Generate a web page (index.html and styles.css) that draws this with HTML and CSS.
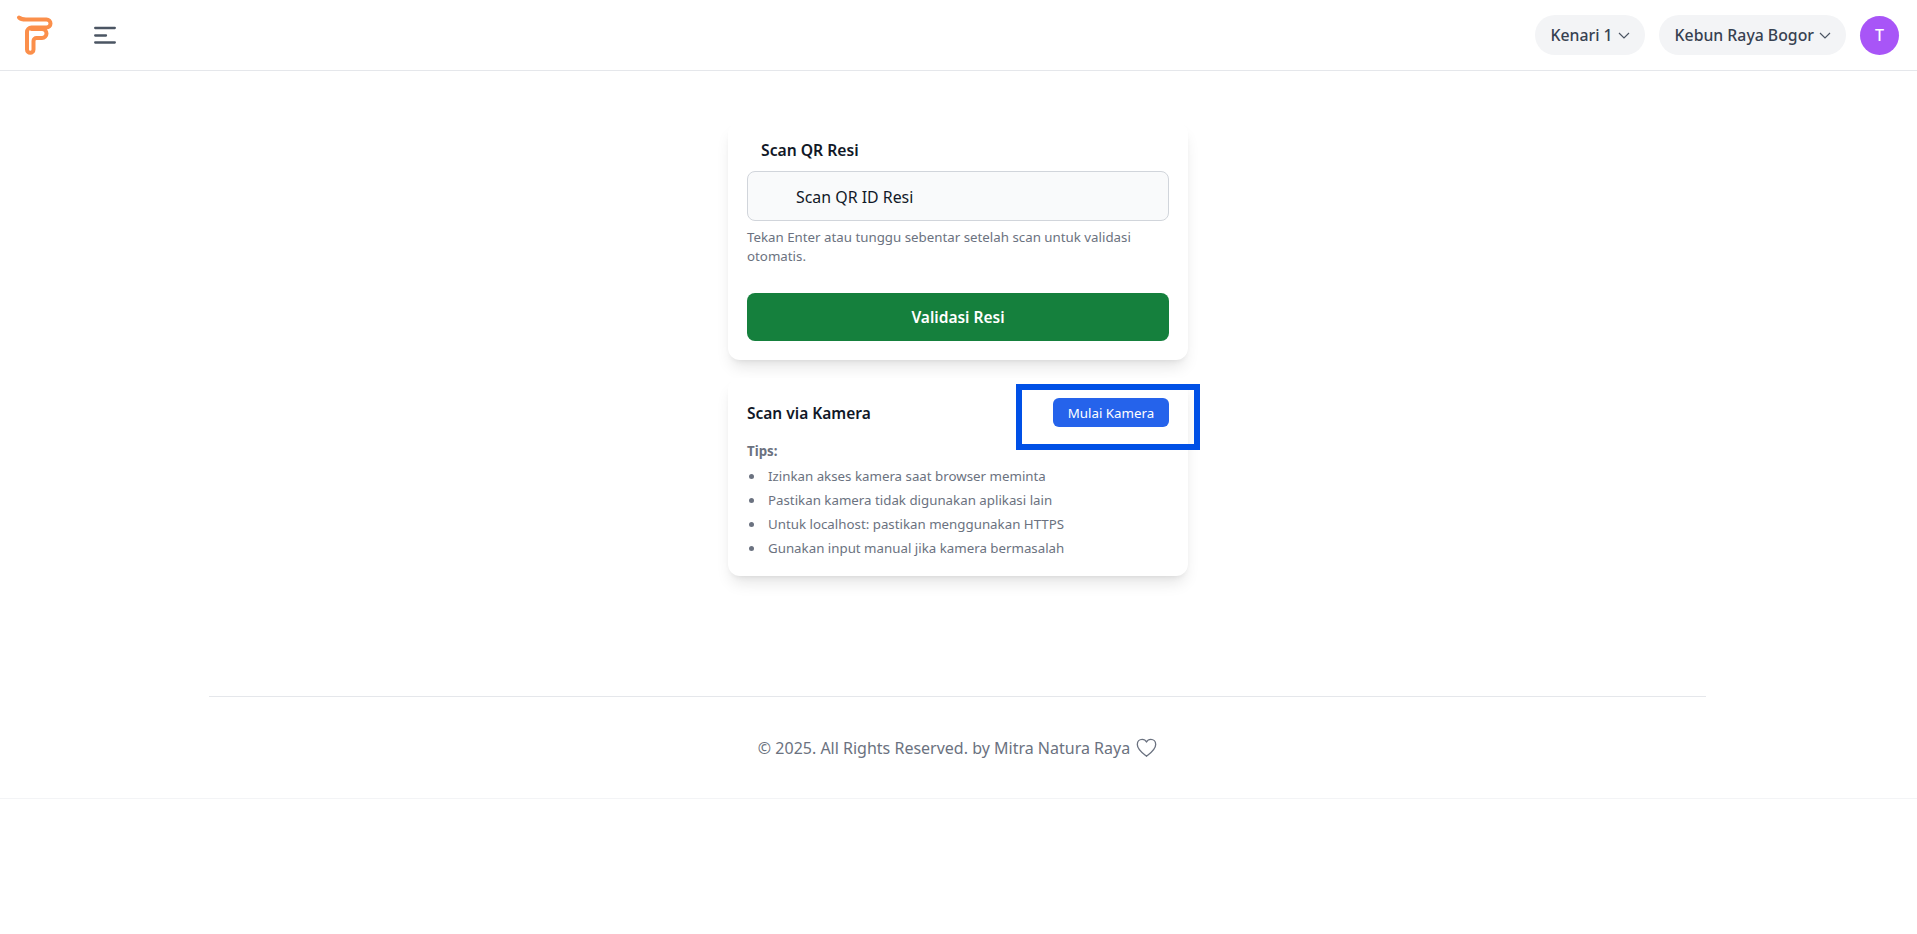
FILE: index.html
```html
<!DOCTYPE html>
<html lang="en">
<head>
  <meta charset="UTF-8">
  <title>Scan QR Resi</title>
  <link rel="stylesheet" href="styles.css">
</head>

<body>
  <header class="topbar">
    <div class="topbar-left">
      <svg class="logo" width="40" height="44" viewBox="0 0 40 44" fill="none" stroke="#fb8f4b" stroke-width="4" stroke-linecap="round" stroke-linejoin="round">
        <path d="M3 4.500 Q5 6.500 10 6.500 H30.500 A4 4 0 0 1 30.500 14.500 H15.500 A4.500 4.500 0 0 0 11 19 V36.500 A3.200 3.200 0 0 0 17.500 36.500 V28 A3 3 0 0 1 20.500 25 H26 A4.500 4.500 0 0 0 26 16 H15.500"/>
      </svg>
      <svg class="menu-icon" width="22" height="18" viewBox="0 0 22 18" fill="none" stroke="#4b5563" stroke-width="2.300" stroke-linecap="round">
        <path d="M1.200 2H20.800"/>
        <path d="M1.200 9.500H12"/>
        <path d="M1.200 16.500H20.800"/>
      </svg>
    </div>
    <div class="topbar-right">
      <button class="pill">Kenari 1
        <svg class="chevron" width="12" height="12" viewBox="0 0 12 12" fill="none" stroke="#4b5563" stroke-width="1.200"><path d="M1 4l5 5 5-5"/></svg>
      </button>
      <button class="pill">Kebun Raya Bogor
        <svg class="chevron" width="12" height="12" viewBox="0 0 12 12" fill="none" stroke="#4b5563" stroke-width="1.200"><path d="M1 4l5 5 5-5"/></svg>
      </button>
      <div class="avatar">T</div>
    </div>
  </header>

  <main class="content">
    <section class="card card-resi">
      <h2 class="resi-title">Scan QR Resi</h2>
      <div class="resi-input">Scan QR ID Resi</div>
      <p class="hint">Tekan Enter atau tunggu sebentar setelah scan untuk validasi otomatis.</p>
      <button class="btn-validate">Validasi Resi</button>
    </section>

    <section class="card card-camera">
      <div class="camera-head">
        <h2>Scan via Kamera</h2>
        <button class="btn-camera">Mulai Kamera</button>
        <div class="highlight"></div>
      </div>
      <p class="tips-title">Tips:</p>
      <ul class="tips">
        <li>Izinkan akses kamera saat browser meminta</li>
        <li>Pastikan kamera tidak digunakan aplikasi lain</li>
        <li>Untuk localhost: pastikan menggunakan HTTPS</li>
        <li>Gunakan input manual jika kamera bermasalah</li>
      </ul>
    </section>
  </main>

  <footer class="footer">
    <div class="footer-inner">
      © 2025. All Rights Reserved. by Mitra Natura Raya
      <svg class="heart" width="21" height="20" viewBox="0 0 24 22" fill="none" stroke="#6b7280" stroke-width="1.500" stroke-linejoin="round">
        <path d="M12 20.500 C9 18 1.500 13 1.500 7 C1.500 3.500 4 1.200 7 1.200 C9 1.200 11 2.200 12 4.200 C13 2.200 15 1.200 17 1.200 C20 1.200 22.500 3.500 22.500 7 C22.500 13 15 18 12 20.500 Z"/>
      </svg>
    </div>
  </footer>
</body>
</html>
```

FILE: styles.css
```css
* {
  box-sizing: border-box;
}

body {
  margin: 0;
  background: #fff;
  font-family: "Noto Sans", Arial, sans-serif;
  color: #111827;
}

h2, p, ul {
  margin: 0;
  padding: 0;
}

button {
  font-family: inherit;
  border: none;
  cursor: pointer;
}

.topbar {
  height: 71px;
  display: flex;
  align-items: center;
  justify-content: space-between;
  padding: 0 18px 0 16px;
  border-bottom: 1px solid #e5e7eb;
}

.topbar-left {
  display: flex;
  align-items: center;
  gap: 38px;
}

.topbar-right {
  display: flex;
  align-items: center;
  gap: 14px;
}

.pill {
  height: 40px;
  display: flex;
  align-items: center;
  gap: 5px;
  padding: 0 15px 0 16px;
  background: #f3f4f6;
  border-radius: 20px;
  font-size: 15.8px;
  font-weight: 500;
  color: #374151;
}

.avatar {
  width: 39px;
  height: 39px;
  border-radius: 50%;
  background: #a855f7;
  color: #fff;
  font-size: 16px;
  font-weight: 500;
  display: flex;
  align-items: center;
  justify-content: center;
}

.content {
  width: 460px;
  margin: 51px 0 0 728px;
  display: flex;
  flex-direction: column;
  gap: 18px;
}

.card {
  background: #fff;
  border-radius: 12px;
  box-shadow: 0 10px 15px -3px rgba(0, 0, 0, 0.1), 0 4px 6px -4px rgba(0, 0, 0, 0.1);
  padding: 0 19px;
}

.card-resi {
  height: 238px;
  padding-top: 16px;
}

.card-camera {
  height: 198px;
  padding-top: 20px;
}

.resi-title {
  font-size: 15.7px;
  font-weight: 600;
  line-height: 24px;
  padding-left: 14px;
}

.resi-input {
  height: 50px;
  margin-top: 9px;
  padding: 2px 0 0 48px;
  display: flex;
  align-items: center;
  background: #f9fafb;
  border: 1px solid #d1d5db;
  border-radius: 8px;
  font-size: 15.9px;
}

.hint {
  margin-top: 7px;
  font-size: 13.3px;
  line-height: 18.6px;
  color: #6b7280;
}

.btn-validate {
  width: 100%;
  height: 48px;
  margin-top: 28px;
  background: #15803d;
  border-radius: 8px;
  color: #fff;
  font-size: 15.5px;
  font-weight: 600;
}

.camera-head {
  position: relative;
  display: flex;
  align-items: center;
  justify-content: space-between;
  height: 29px;
}

.camera-head h2 {
  font-size: 15.5px;
  font-weight: 600;
}

.btn-camera {
  height: 29px;
  width: 116px;
  background: #2563eb;
  border-radius: 6px;
  color: #fff;
  font-size: 13.3px;
  font-weight: 400;
}

.highlight {
  position: absolute;
  left: 269px;
  top: -14px;
  width: 184px;
  height: 66px;
  border: 6px solid #0050e6;
}

.tips-title {
  margin-top: 12px;
  font-size: 13.3px;
  font-weight: 700;
  line-height: 24px;
  color: #6b7280;
}

.tips {
  list-style: none;
  margin-top: 1px;
  font-size: 13.3px;
  color: #6b7280;
}

.tips li {
  position: relative;
  line-height: 24px;
  padding-left: 21px;
}

.tips li::before {
  content: "";
  position: absolute;
  left: 2px;
  top: 10px;
  width: 5px;
  height: 5px;
  border-radius: 50%;
  background: #6b7280;
}

.footer {
  height: 103px;
  margin-top: 120px;
  padding: 0 211px 0 209px;
  border-bottom: 1px solid #f3f4f6;
}

.footer-inner {
  height: 102px;
  border-top: 1px solid #e5e7eb;
  display: flex;
  align-items: center;
  justify-content: center;
  gap: 6px;
  font-size: 16px;
  color: #6b7280;
}
```
